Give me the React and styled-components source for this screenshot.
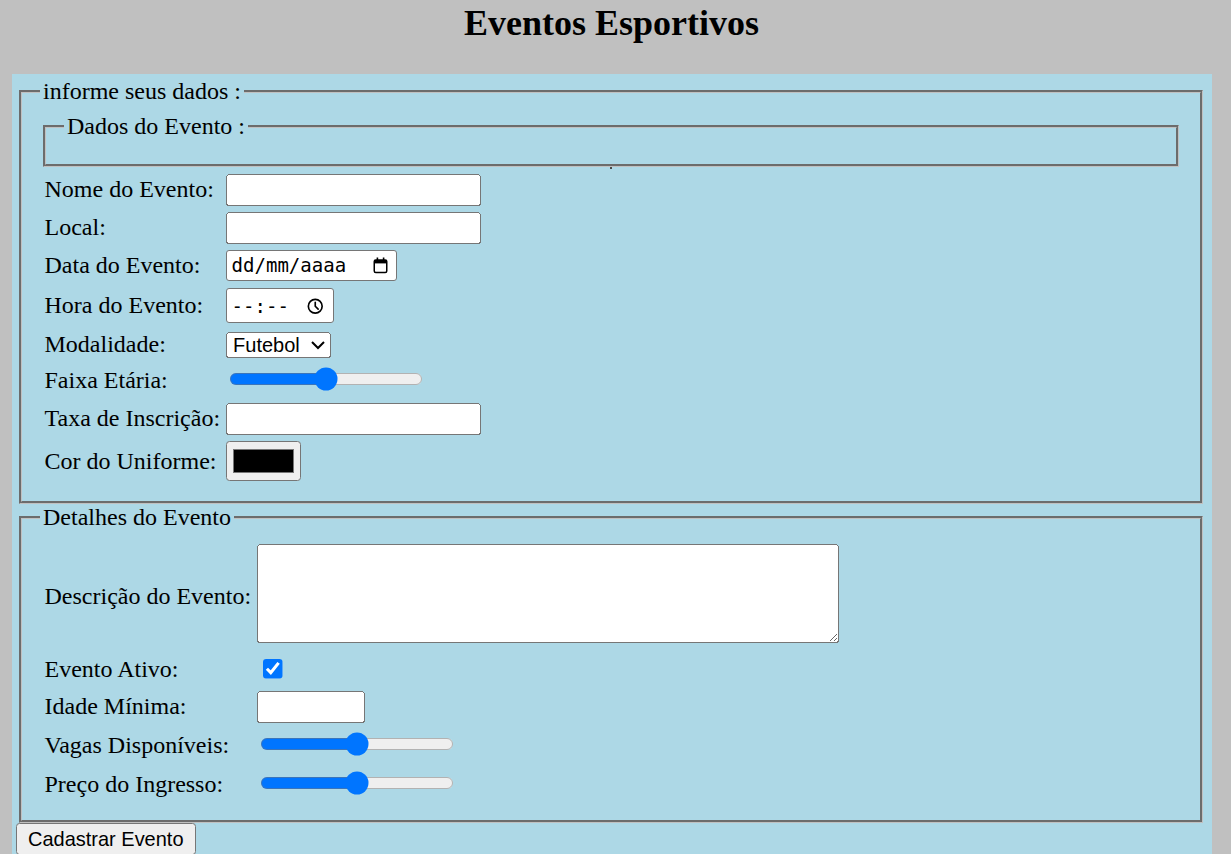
import styled, { createGlobalStyle } from "styled-components";

const GlobalStyle = createGlobalStyle`
  html {
    zoom: 1.5;
  }
  body {
    margin: 0 8px 8px;
    background: silver;
    color: #000;
    font-family: "Liberation Serif", "Times New Roman", serif;
    font-size: 16px;
  }
`;

const Title = styled.h2`
  margin: 1.3px 0 19.92px;
  padding-right: 5.33px;
  text-align: center;
  font-size: 24px;
  font-weight: bold;
`;

const Panel = styled.form`
  width: 800px;
  box-sizing: border-box;
  padding: 2.67px;
  background: lightblue;
`;

const Group = styled.fieldset`
  margin: ${(p) => p.$top || 0}px 3.6px 0 2px;
  border: 2px groove #c0c0c0;
`;

const SubGroup = styled.fieldset`
  margin: 0 2px;
  border: 2px groove #c0c0c0;
`;

const Mark = styled.span`
  display: block;
  width: 1.4px;
  height: 1.4px;
  margin: 0.4px auto 0;
  background: #4a4a4a;
`;

const FormTable = styled.table`
  border-spacing: 2px;
`;

const LabelCell = styled.td`
  padding: 1px;
  white-space: nowrap;
`;

const FieldCell = styled.td`
  padding: 1px;
`;

const Text = styled.input`
  box-sizing: border-box;
  width: ${(p) => p.$w || "170px"};
  font-family: "Liberation Sans", Arial, sans-serif;
  font-size: 13.333px;
`;

const PickerShell = styled.label`
  display: inline-flex;
  align-items: center;
  justify-content: space-between;
  box-sizing: border-box;
  width: ${(p) => p.$w};
  height: ${(p) => p.$h};
  margin: ${(p) => p.$m || 0};
  padding: 0 ${(p) => p.$pr} 0 3px;
  border: 1px solid #767676;
  border-radius: 2px;
  background: #fff;
  vertical-align: middle;
  cursor: text;

  svg {
    flex: none;
  }
`;

const PickerText = styled.input`
  width: ${(p) => p.$w};
  margin: 0;
  padding: 0;
  border: 0;
  outline: none;
  background: transparent;
  color: #000;
  font-family: "DejaVu Sans Mono", "Liberation Mono", monospace;
  font-size: 12.7px;

  &::placeholder {
    color: #000;
    opacity: 1;
  }
`;

const Choice = styled.select`
  box-sizing: border-box;
  width: 70px;
  font-family: "Liberation Sans", Arial, sans-serif;
  font-size: 13.333px;
`;

const Notes = styled.textarea`
  box-sizing: border-box;
  width: 388px;
  height: 66px;
  font-family: "Liberation Mono", monospace;
`;

const Submit = styled.button`
  font-family: "Liberation Sans", Arial, sans-serif;
  font-size: 13.333px;
`;

const CalendarIcon = () => (
  <svg width="10" height="11" viewBox="0 0 15 16.5" fill="none">
    <rect x="1.25" y="3" width="12.5" height="12.5" rx="1.5" stroke="#000" strokeWidth="1.5" />
    <rect x="1.25" y="3" width="12.5" height="3.4" fill="#000" />
    <rect x="3.6" y="0.5" width="1.6" height="3" fill="#000" />
    <rect x="9.8" y="0.5" width="1.6" height="3" fill="#000" />
  </svg>
);

const ClockIcon = () => (
  <svg width="11" height="11" viewBox="0 0 16 16" fill="none">
    <circle cx="8" cy="8" r="6.7" stroke="#000" strokeWidth="1.6" />
    <path d="M8 4.2V8l2.8 2.8" stroke="#000" strokeWidth="1.6" strokeLinecap="round" />
  </svg>
);

const eventRows = [
  ["Nome do Evento:", <Text type="text" />],
  ["Local:", <Text type="text" />],
  [
    "Data do Evento:",
    <PickerShell $w="114px" $h="20.67px" $pr="5.6px">
      <PickerText type="text" placeholder="dd/mm/aaaa" $w="80px" />
      <CalendarIcon />
    </PickerShell>,
  ],
  [
    "Hora do Evento:",
    <PickerShell $w="72px" $h="23.33px" $pr="6.2px" $m="1px 0">
      <PickerText type="text" placeholder="--:--" $w="42px" />
      <ClockIcon />
    </PickerShell>,
  ],
  [
    "Modalidade:",
    <Choice defaultValue="futebol">
      <option value="futebol">Futebol</option>
      <option value="volei">Vôlei</option>
      <option value="tenis">Tênis</option>
    </Choice>,
  ],
  ["Faixa Etária:", <input type="range" />],
  ["Taxa de Inscrição:", <Text type="text" />],
  ["Cor do Uniforme:", <input type="color" defaultValue="#000000" />],
];

const detailRows = [
  ["Descrição do Evento:", <Notes />],
  ["Evento Ativo:", <input type="checkbox" defaultChecked />],
  ["Idade Mínima:", <Text type="number" $w="72px" />],
  ["Vagas Disponíveis:", <input type="range" />],
  ["Preço do Ingresso:", <input type="range" />],
];

const Rows = ({ rows }) => (
  <FormTable>
    <tbody>
      {rows.map(([label, field]) => (
        <tr key={label}>
          <LabelCell>
            <label>{label}</label>
          </LabelCell>
          <FieldCell>{field}</FieldCell>
        </tr>
      ))}
    </tbody>
  </FormTable>
);

export default function App() {
  return (
    <>
      <GlobalStyle />
      <Title>Eventos Esportivos</Title>
      <Panel onSubmit={(e) => e.preventDefault()}>
        <Group>
          <legend>informe seus dados :</legend>
          <SubGroup>
            <legend>Dados do Evento :</legend>
          </SubGroup>
          <Mark />
          <Rows rows={eventRows} />
        </Group>
        <Group>
          <legend>Detalhes do Evento</legend>
          <Rows rows={detailRows} />
        </Group>
        <Submit type="submit">Cadastrar Evento</Submit>
      </Panel>
    </>
  );
}
